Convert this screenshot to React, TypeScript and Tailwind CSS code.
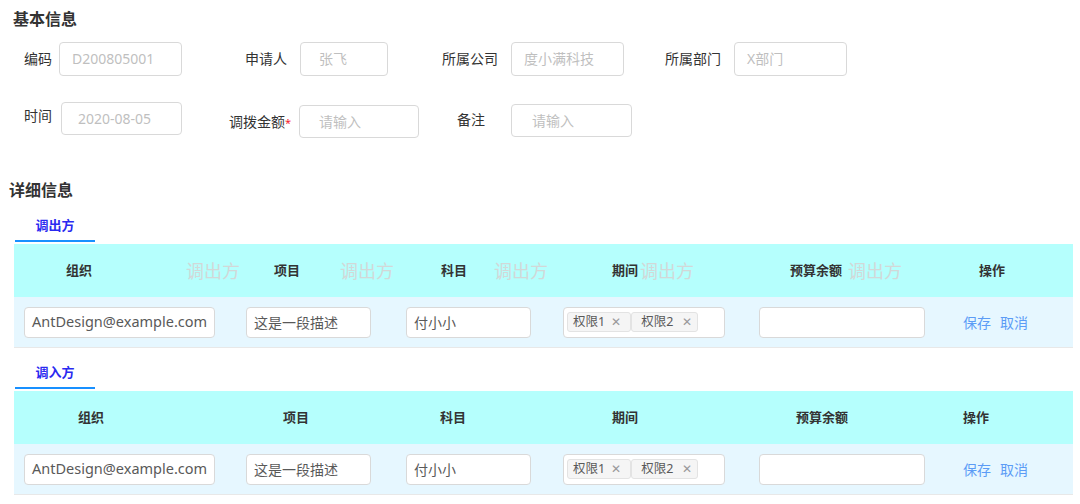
import React from 'react';

const Box = ({ text, className }: { text: string; className: string }) => (
  <div className={`flex items-center rounded-[4px] border border-[#d9d9d9] bg-white text-[14px] text-[#bfbfbf] ${className}`}>
    {text}
  </div>
);

const CellInput = ({ text, className }: { text: string; className: string }) => (
  <div className={`flex h-[31px] items-center overflow-hidden whitespace-nowrap rounded-[4px] border border-[#d9d9d9] bg-white pl-[7px] text-[#595959] ${className}`}>
    {text}
  </div>
);

const Tag = ({ label, className }: { label: string; className: string }) => (
  <div className={`flex h-[20px] shrink-0 items-center whitespace-nowrap rounded-[3px] border border-[#e3e3e3] bg-[#f5f5f5] text-[12.5px] text-[#595959] ${className}`}>
    <span>{label}</span>
    <span className="text-[12px] leading-none text-[#999]">✕</span>
  </div>
);

const DataRow = () => (
  <div className="flex h-[51px] items-center border-b border-[#e8e8e8] bg-[#e6f7ff] text-[14px]">
    <div className="w-[222px] pl-[10px]">
      <CellInput text="AntDesign@example.com" className="w-[191px] text-[14.5px]" />
    </div>
    <div className="w-[160px] pl-[10px]">
      <CellInput text="这是一段描述" className="w-[125px]" />
    </div>
    <div className="w-[157px] pl-[10px]">
      <CellInput text="付小小" className="w-[125px]" />
    </div>
    <div className="w-[196px] pl-[10px]">
      <div className="flex h-[31px] w-[162px] items-center rounded-[4px] border border-[#d9d9d9] bg-white pl-[3px]">
        <Tag label="权限1" className="gap-[6px] pl-[5px] pr-[9px]" />
        <Tag label="权限2" className="gap-[9px] pl-[9px] pr-[5px]" />
      </div>
    </div>
    <div className="w-[204px] pl-[10px]">
      <div className="h-[31px] w-[166px] rounded-[4px] border border-[#d9d9d9] bg-white" />
    </div>
    <div className="flex w-[120px] gap-[9px] pl-[10px] text-[#5b9cf6]">
      <span>保存</span>
      <span>取消</span>
    </div>
  </div>
);

const Tab = ({ title, className }: { title: string; className: string }) => (
  <div className={`ml-[15px] w-[80px] border-b-2 border-[#1890ff] pb-[6px] text-center text-[13px] font-bold leading-[18px] text-[#2a2af0] ${className}`}>
    {title}
  </div>
);

export default function App() {
  return (
    <div className="h-[504px] w-[1080px] overflow-hidden bg-white font-['Noto_Sans','Noto_Sans_CJK_SC',sans-serif] text-[#333]">
      {/* 基本信息 */}
      <h2 className="ml-[13px] pt-[9px] text-[16px] font-bold leading-[20px] text-[#333]">基本信息</h2>

      <div className="mt-[13px] flex h-[34px] items-center text-[14px] leading-[20px]">
        <span className="ml-[24px]">编码</span>
        <Box text="D200805001" className="ml-[7px] h-[34px] w-[123px] pl-[12px]" />
        <span className="ml-[63px]">申请人</span>
        <Box text="张飞" className="ml-[13px] h-[34px] w-[88px] pl-[18px]" />
        <span className="ml-[54px]">所属公司</span>
        <Box text="度小满科技" className="ml-[13px] h-[34px] w-[113px] pl-[12px]" />
        <span className="ml-[41px]">所属部门</span>
        <Box text="X部门" className="ml-[13px] h-[34px] w-[113px] pl-[12px]" />
      </div>

      <div className="mt-[25px] flex h-[37px] items-start text-[14px] leading-[20px]">
        <span className="ml-[24px] mt-[5px]">时间</span>
        <Box text="2020-08-05" className="ml-[9px] mt-[1px] h-[33px] w-[121px] pl-[16px]" />
        <span className="ml-[47px] mt-[11px]">
          调拨金额<span className="text-[11px] text-[#f5222d]">*</span>
        </span>
        <Box text="请输入" className="ml-[8px] mt-[4px] h-[33px] w-[120px] pl-[19px]" />
        <span className="ml-[38px] mt-[9px]">备注</span>
        <Box text="请输入" className="ml-[26px] mt-[3px] h-[33px] w-[121px] pl-[20px]" />
      </div>

      {/* 详细信息 */}
      <h2 className="ml-[9px] mt-[43px] text-[16px] font-bold leading-[18px] text-[#333]">详细信息</h2>

      <Tab title="调出方" className="mt-[17px]" />
      <div className="ml-[14px] mt-[2px] w-[1059px]">
        <div className="relative flex h-[53px] items-center bg-[#b5fffd] text-[13px] font-bold text-[#333]">
          <div className="w-[222px] pl-[52px]">组织</div>
          <div className="w-[160px] pl-[38px]">项目</div>
          <div className="w-[157px] pl-[45px]">科目</div>
          <div className="w-[196px] pl-[59px]">期间</div>
          <div className="w-[204px] pl-[41px]">预算余额</div>
          <div className="w-[120px] pl-[26px]">操作</div>
          {/* watermark */}
          <span className="absolute left-[172px] top-[15px] text-[18px] font-normal leading-[24px] text-[#d2d8d8]">调出方</span>
          <span className="absolute left-[326px] top-[15px] text-[18px] font-normal leading-[24px] text-[#d2d8d8]">调出方</span>
          <span className="absolute left-[480px] top-[15px] text-[18px] font-normal leading-[24px] text-[#d2d8d8]">调出方</span>
          <span className="absolute left-[626px] top-[15px] text-[18px] font-normal leading-[24px] text-[#d2d8d8]">调出方</span>
          <span className="absolute left-[834px] top-[15px] text-[18px] font-normal leading-[24px] text-[#d2d8d8]">调出方</span>
        </div>
        <DataRow />
      </div>

      <Tab title="调入方" className="mt-[15px]" />
      <div className="ml-[14px] mt-[2px] w-[1059px]">
        <div className="flex h-[53px] items-center bg-[#b5fffd] text-[13px] font-bold text-[#333]">
          <div className="w-[222px] pl-[64px]">组织</div>
          <div className="w-[160px] pl-[47px]">项目</div>
          <div className="w-[157px] pl-[44px]">科目</div>
          <div className="w-[196px] pl-[59px]">期间</div>
          <div className="w-[204px] pl-[47px]">预算余额</div>
          <div className="w-[120px] pl-[10px]">操作</div>
        </div>
        <DataRow />
      </div>
    </div>
  );
}
